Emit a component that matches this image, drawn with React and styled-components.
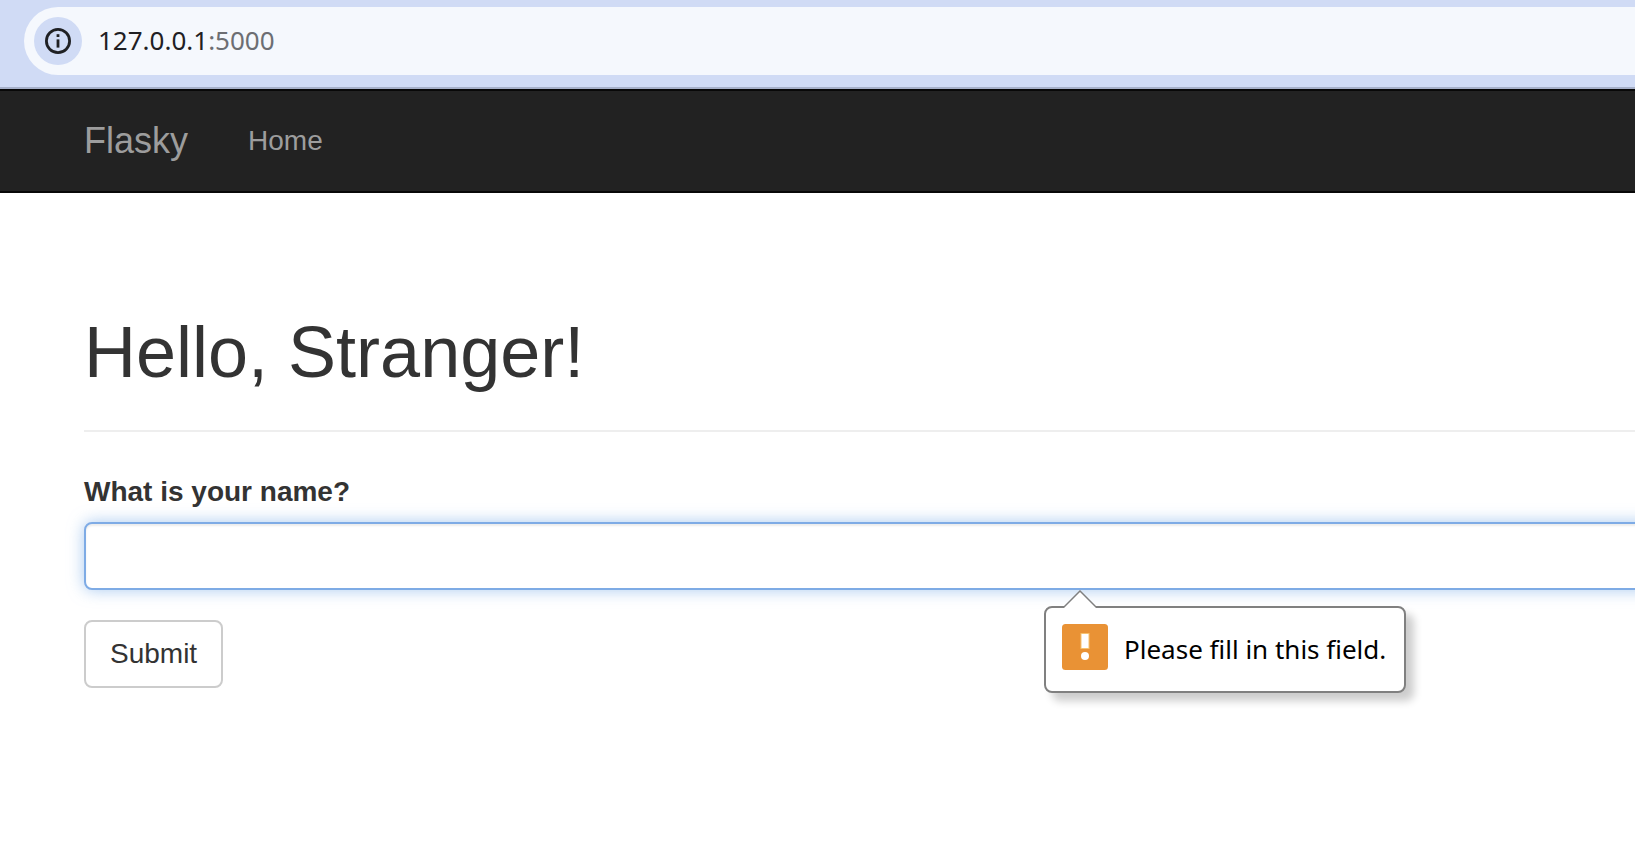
import React from "react";
import styled, { createGlobalStyle } from "styled-components";

const GlobalStyle = createGlobalStyle`
  *, *::before, *::after { box-sizing: border-box; }
  body {
    margin: 0;
    background: #fff;
    color: #333;
    font-family: "Liberation Sans", Arial, sans-serif;
    font-size: 28px;
    line-height: 40px;
  }
`;

const uiFont = `"Noto Sans", "Segoe UI", sans-serif`;

const BrowserBar = styled.div`
  padding: 7px 0 12px 24px;
  background: #d0dbf5;
  border-bottom: 2px solid #a6b0c9;
`;

const AddressBox = styled.div`
  display: flex;
  align-items: center;
  gap: 16px;
  height: 68px;
  padding-left: 10px;
  border-radius: 34px 0 0 34px;
  background: #f5f8fd;
`;

const SiteInfoButton = styled.button`
  display: flex;
  align-items: center;
  justify-content: center;
  width: 48px;
  height: 48px;
  padding: 0;
  border: 0;
  border-radius: 50%;
  background: #d0dbf5;
`;

const Address = styled.span`
  padding-bottom: 2px;
  font-family: ${uiFont};
  font-size: 26px;
  color: #1f2023;
`;

const Port = styled.span`
  color: #6c6e73;
`;

const Navbar = styled.nav`
  display: flex;
  align-items: center;
  gap: 60px;
  padding: 30px 84px;
  background: #222;
  border-top: 2px solid #080808;
  border-bottom: 2px solid #080808;
`;

const NavLink = styled.a`
  color: #9d9d9d;
  font-size: ${(p) => (p.$brand ? 36 : 28)}px;
  text-decoration: none;
`;

const Page = styled.main`
  overflow: hidden;
  padding: 120px 0 40px 84px;
`;

const PageHeader = styled.header`
  padding-bottom: 38px;
  margin-bottom: 40px;
  border-bottom: 2px solid #eee;
`;

const Title = styled.h1`
  margin: 0;
  font-size: 72px;
  font-weight: 400;
  line-height: 79px;
`;

const Field = styled.div`
  position: relative;
  margin-bottom: 30px;
`;

const Label = styled.label`
  display: block;
  margin-bottom: 10px;
  font-weight: 700;
`;

const TextInput = styled.input`
  display: block;
  width: calc(100% + 32px);
  height: 68px;
  padding: 12px 24px;
  border: 2px solid #7eabe5;
  border-radius: 8px;
  outline: 0;
  background: #fff;
  color: #555;
  font: inherit;
  box-shadow: inset 0 2px 2px rgba(0, 0, 0, 0.075), 0 0 16px rgba(110, 165, 230, 0.6);
`;

const SubmitButton = styled.button`
  padding: 12px 24px;
  border: 2px solid #ccc;
  border-radius: 8px;
  background: #fff;
  color: #333;
  font: inherit;
`;

const Tooltip = styled.div`
  position: absolute;
  top: calc(100% + 16px);
  left: 960px;
  display: flex;
  align-items: center;
  gap: 16px;
  padding: 16px 18px 21px 16px;
  border: 2px solid #808080;
  border-radius: 8px;
  background: #fff;
  color: #000;
  font-family: ${uiFont};
  font-size: 26px;
  white-space: nowrap;
  box-shadow: 8px 8px 8px rgba(0, 0, 0, 0.2);
`;

const TooltipText = styled.span`
  padding-top: 4px;
`;

const Pointer = styled.svg`
  position: absolute;
  left: 17px;
  bottom: 100%;
  margin-bottom: -1px;
`;

const InfoIcon = () => (
  <svg width="26" height="26" viewBox="0 0 26 26" aria-hidden="true">
    <circle cx="13" cy="13" r="11.6" fill="none" stroke="#1f2023" strokeWidth="2.8" />
    <rect x="11.6" y="6.2" width="2.8" height="2.8" fill="#1f2023" />
    <rect x="11.6" y="11.4" width="2.8" height="8.2" fill="#1f2023" />
  </svg>
);

const WarningIcon = () => (
  <svg width="46" height="46" viewBox="0 0 46 46" aria-hidden="true">
    <rect width="46" height="46" rx="3.5" fill="#e99235" />
    <rect x="18.5" y="9" width="9" height="16" fill="#f6c26f" />
    <rect x="19.5" y="10" width="7" height="14" fill="#fff" />
    <circle cx="23" cy="32" r="4" fill="#fff" />
  </svg>
);

export default function App() {
  return (
    <>
      <GlobalStyle />
      <BrowserBar>
        <AddressBox>
          <SiteInfoButton type="button" aria-label="View site information">
            <InfoIcon />
          </SiteInfoButton>
          <Address>
            127.0.0.1<Port>:5000</Port>
          </Address>
        </AddressBox>
      </BrowserBar>
      <Navbar>
        <NavLink $brand href="/">Flasky</NavLink>
        <NavLink href="/">Home</NavLink>
      </Navbar>
      <Page>
        <PageHeader>
          <Title>Hello, Stranger!</Title>
        </PageHeader>
        <form onSubmit={(e) => e.preventDefault()}>
          <Field>
            <Label htmlFor="name">What is your name?</Label>
            <TextInput id="name" name="name" type="text" aria-describedby="name-hint" />
            <Tooltip id="name-hint" role="tooltip">
              <Pointer width="34" height="19" viewBox="0 0 34 19" aria-hidden="true">
                <path d="M1 17 17 1 33 17V19H1Z" fill="#fff" />
                <path d="M0.5 17.5 17 1 33.5 17.5" fill="none" stroke="#808080" strokeWidth="1.5" />
              </Pointer>
              <WarningIcon />
              <TooltipText>Please fill in this field.</TooltipText>
            </Tooltip>
          </Field>
          <SubmitButton type="submit">Submit</SubmitButton>
        </form>
      </Page>
    </>
  );
}
